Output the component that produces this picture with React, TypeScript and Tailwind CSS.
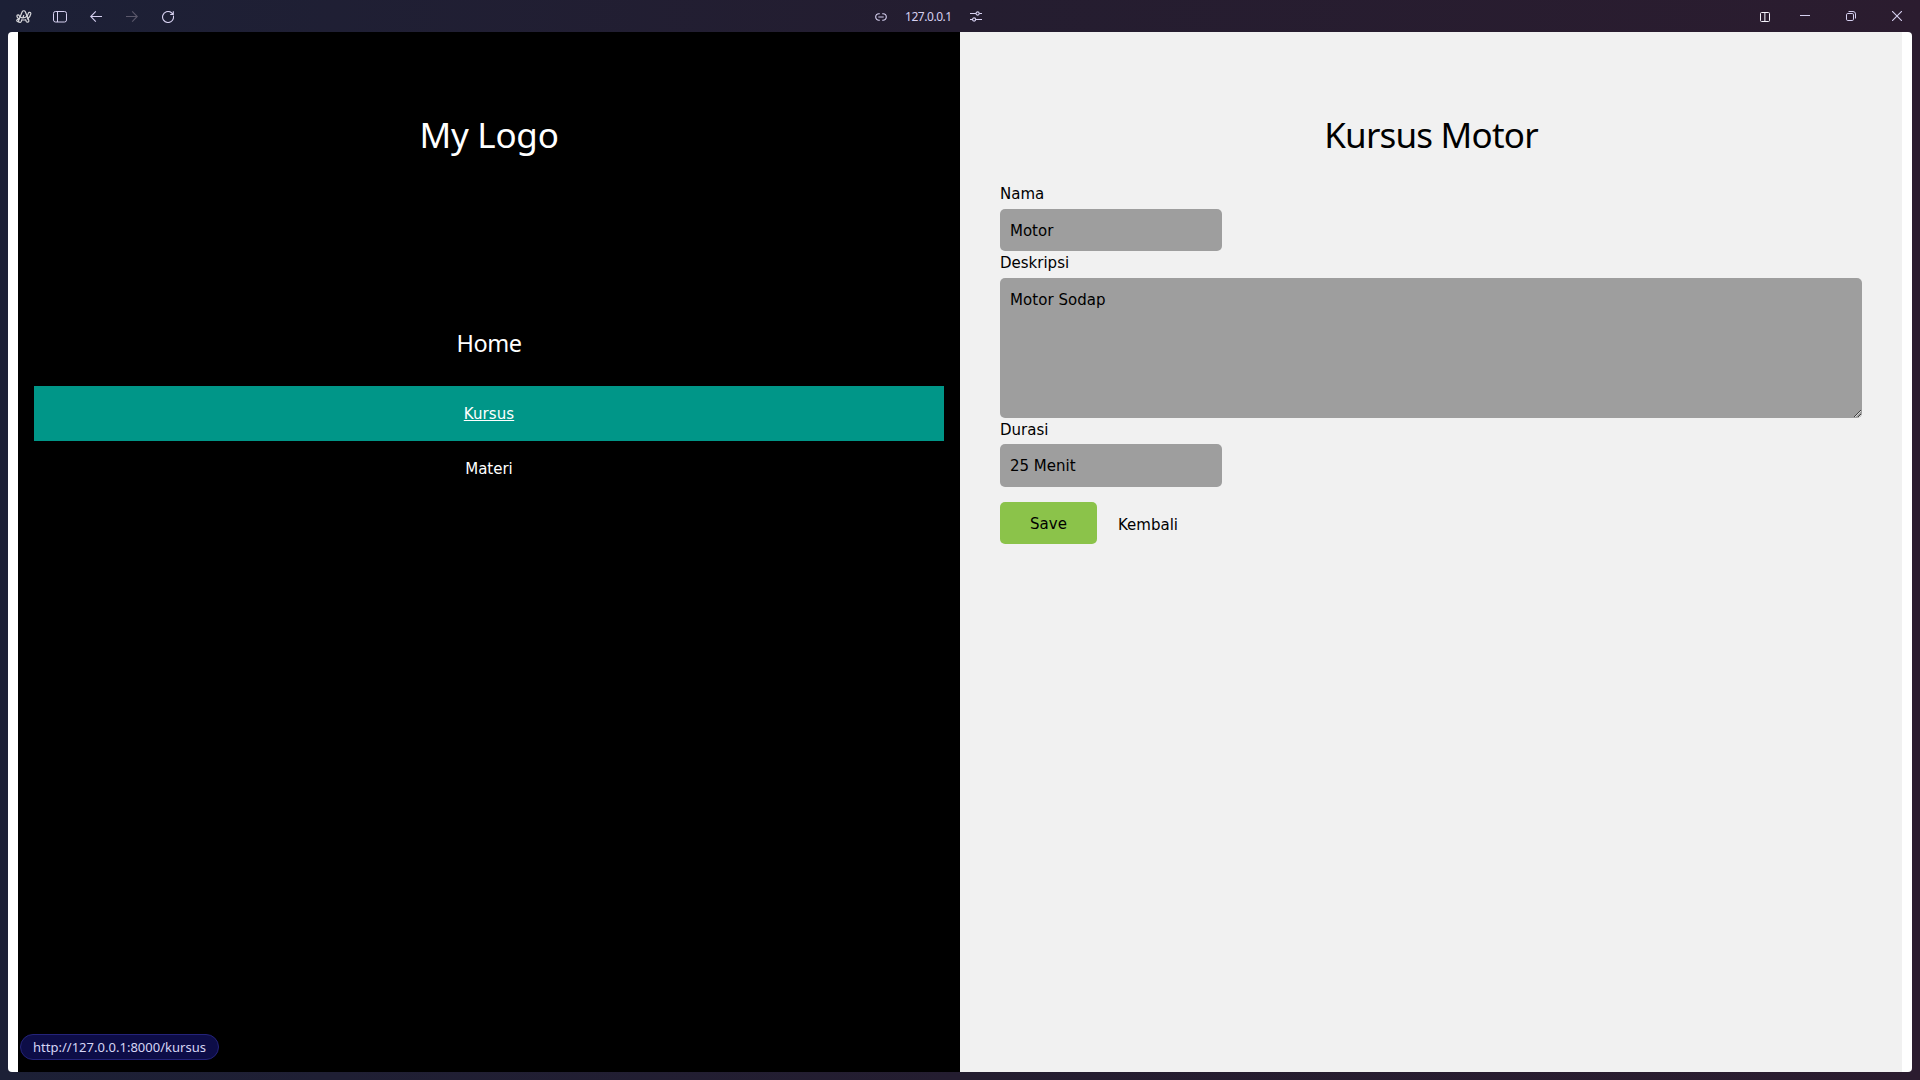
import React from "react";

const SEGOE = "font-['Noto_Sans',sans-serif]";

function ArcIcon() {
  return (
    <svg className="h-[14px] w-[16px]" viewBox="0 0 16 14" fill="none" stroke="currentColor" strokeWidth="1.2" strokeLinejoin="round" strokeLinecap="round">
      <path d="M6.2 1.7C6.800.4 8.800.4 9.300 1.700l3.500 8.600c.5 1.900-1.800 2.500-2.500 1.100l-.7-1.700c-1.300.4-2.500.4-3.700 0l-.7 1.700c-.8 1.700-3.200.7-2.600-.9z" />
      <path d="M2.900 9C1.500 8.100 1 7 .9 6.100.9 4.500 2.900 4.400 3.200 5.800c.5 1.200 1.500 1.800 2.800 2 3 .3 5.600-1.600 6.300-4.400.4-1.500 2.700-1.200 2.500.5-.3 1.900-1.600 3.800-3.400 5M2.500 9.300c-1.500-.2-2 .9-1.600 1.600.3.600 1 .9 1.700 1.100M7.700 5.500l-.8 2.200" />
    </svg>
  );
}

function TitleBar() {
  return (
    <header className="grid h-8 grid-cols-[1fr_auto_1fr] items-center text-[#d6d0f0]">
      <div className="flex h-8 items-center pt-px">
        <div className="ml-4 flex w-9 text-[#d8d8dc]"><ArcIcon /></div>
        <div className="flex w-9">
          <svg className="ml-px h-3 w-[14px]" viewBox="0 0 14 12" fill="none" stroke="currentColor">
            <rect x=".5" y=".5" width="13" height="10.500" rx="2" />
            <path d="M4.500 .5v10.500" />
          </svg>
        </div>
        <div className="flex w-9">
          <svg className="ml-[2px] h-3 w-3" viewBox="0 0 12 12" fill="none" stroke="currentColor" strokeWidth="1.100">
            <path d="M12 5.500H.7M5.800.4.7 5.500l5.100 5.200" />
          </svg>
        </div>
        <div className="flex w-9 text-[#5b586b]">
          <svg className="ml-[2px] h-3 w-3" viewBox="0 0 12 12" fill="none" stroke="currentColor" strokeWidth="1.100">
            <path d="M0 5.500h11.300M6.200.4l5.100 5.100-5.100 5.200" />
          </svg>
        </div>
        <svg className="ml-[2px] h-3 w-3" viewBox="0 0 12 12" fill="none" stroke="currentColor" strokeWidth="1.100">
          <path d="M11.400 4.700A5.500 5.500 0 1 1 9.200 1.500L11.200 3.300M11.300.2v3.300H8.200" />
        </svg>
      </div>
      <div className="flex h-8 w-[172px] items-center">
        <svg className="mt-px ml-px h-[8px] w-[12px] shrink-0" viewBox="0 0 12 8" fill="none" stroke="currentColor" strokeWidth="1.100">
          <path d="M4.800.7H4a3.300 3.300 0 0 0 0 6.600h.8M7.200.7H8a3.300 3.300 0 0 1 0 6.600h-.8M3.300 4h5.400" />
        </svg>
        <span className={`ml-[18px] w-[46px] pt-px text-[12px] leading-8 tracking-[-0.45px] whitespace-nowrap ${SEGOE}`}>127.0.0.1</span>
        <svg className="ml-[19px] h-[11px] w-[12px] shrink-0" viewBox="0 0 12 11" fill="none" stroke="currentColor" strokeWidth="1.100">
          <path d="M0 2.500h6M9.200 2.500H12M0 8.500h2.500M5.700 8.500H12" />
          <circle cx="7.600" cy="2.500" r="1.600" />
          <circle cx="4.100" cy="8.500" r="1.600" />
        </svg>
      </div>
      <div className="flex h-8 items-center justify-end pr-[18px]">
        <svg className="mr-[30px] mt-[2px] h-[10px] w-[10px]" viewBox="0 0 10 10" fill="none" stroke="#f4f2fa">
          <rect x=".5" y=".5" width="9" height="9" rx="1" />
          <path d="M5 1v8" strokeWidth="2" stroke="#77717f" />
          <path d="M4.500 1v8" strokeWidth="1" stroke="#aaa4b2" />
        </svg>
        <svg className="mr-[36px] mb-px h-px w-[10px]" viewBox="0 0 10 1"><path d="M0 .5h10" stroke="currentColor" /></svg>
        <svg className="mr-[36px] h-[10px] w-[10px]" viewBox="0 0 10 10" fill="none" stroke="currentColor">
          <rect x=".5" y="2.500" width="7" height="7" rx="1.300" />
          <path d="M2.500.5H7A2.500 2.500 0 0 1 9.500 3v4.500" />
        </svg>
        <svg className="h-[10px] w-[10px]" viewBox="0 0 10 10" fill="none" stroke="currentColor" strokeWidth="1.100"><path d="M0 0l10 10M10 0L0 10" /></svg>
      </div>
    </header>
  );
}

function Sidebar() {
  return (
    <nav className="flex w-[942px] flex-col items-center bg-black px-4 text-white">
      <h1 className={`mt-[76px] h-[54px] text-[35px] leading-[54px] tracking-[-0.250px] ${SEGOE}`}>My Logo</h1>
      <h3 className={`mt-[163px] h-9 text-[23.500px] leading-9 tracking-[-0.450px] ${SEGOE}`}>Home</h3>
      <a className="mt-[25px] flex h-[55px] w-full items-center justify-center bg-[#009688] pt-[2px] text-[15px] tracking-[0.100px] underline">Kursus</a>
      <a className="flex h-[55px] w-full items-center justify-center pt-[2px] text-[15px]">Materi</a>
    </nav>
  );
}

function CourseForm() {
  return (
    <main className="w-[942px] bg-[#f1f1f1] px-10 text-[15px] leading-[23px] text-black">
      <h1 className={`mt-[76px] h-[54px] text-center text-[35px] leading-[54px] tracking-[-0.800px] ${SEGOE}`}>Kursus Motor</h1>
      <form className="mt-[20px] flex flex-col items-start">
        <label className="h-[27px] leading-[25px]">Nama</label>
        <input className="h-[42px] w-[222px] rounded-[5px] bg-[#9e9e9e] px-[10px] pt-[2px]" defaultValue="Motor" />
        <label className="h-[27px] leading-[25px]">Deskripsi</label>
        <textarea className="h-[140px] w-full rounded-[5px] bg-[#9e9e9e] px-[10px] pt-[11px] tracking-[0.050px]" defaultValue="Motor Sodap" />
        <label className="h-[26px] leading-[25px]">Durasi</label>
        <input className="h-[43px] w-[222px] rounded-[5px] bg-[#9e9e9e] px-[10px]" defaultValue="25 Menit" />
        <div className="mt-[15px] flex">
          <button type="button" className="h-[42px] w-[97px] rounded-[5px] bg-[#8bc34a] pt-[2px]">Save</button>
          <a className="ml-[21px] leading-[46px]">Kembali</a>
        </div>
      </form>
    </main>
  );
}

export default function App() {
  return (
    <div className="h-[1080px] w-[1920px] overflow-hidden bg-linear-to-r from-[#1c2036] via-[#241d30] to-[#2b1c2f] font-['DejaVu_Sans',sans-serif]">
      <TitleBar />
      <div className="relative mx-2 flex h-[1040px] overflow-hidden rounded-[4px] bg-white px-[10px]">
        <Sidebar />
        <CourseForm />
        <div className={`absolute bottom-3 left-3 flex h-[26px] w-[199px] items-center justify-center rounded-full border border-[#24237a] bg-[#0d0d47] pt-px text-[13px] tracking-[0.020px] text-[#d6d6f5] ${SEGOE}`}>
          http://127.0.0.1:8000/kursus
        </div>
      </div>
    </div>
  );
}
